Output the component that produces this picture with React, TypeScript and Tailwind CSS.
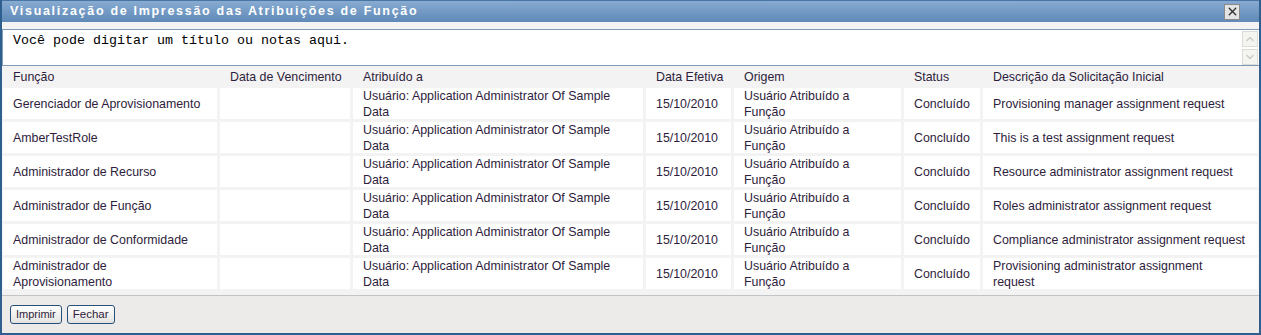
import { X, ChevronUp, ChevronDown } from "lucide-react"

type Row = {
  role: string
  due: string
  assigned: string
  date: string
  origin: string
  status: string
  desc: string
}

const assigned = "Usuário: Application Administrator Of Sample\nData"
const origin = "Usuário Atribuído a\nFunção"

const rows: Row[] = [
  {
    role: "Gerenciador de Aprovisionamento",
    due: "",
    assigned,
    date: "15/10/2010",
    origin,
    status: "Concluído",
    desc: "Provisioning manager assignment request",
  },
  {
    role: "AmberTestRole",
    due: "",
    assigned,
    date: "15/10/2010",
    origin,
    status: "Concluído",
    desc: "This is a test assignment request",
  },
  {
    role: "Administrador de Recurso",
    due: "",
    assigned,
    date: "15/10/2010",
    origin,
    status: "Concluído",
    desc: "Resource administrator assignment request",
  },
  {
    role: "Administrador de Função",
    due: "",
    assigned,
    date: "15/10/2010",
    origin,
    status: "Concluído",
    desc: "Roles administrator assignment request",
  },
  {
    role: "Administrador de Conformidade",
    due: "",
    assigned,
    date: "15/10/2010",
    origin,
    status: "Concluído",
    desc: "Compliance administrator assignment request",
  },
  {
    role: "Administrador de\nAprovisionamento",
    due: "",
    assigned,
    date: "15/10/2010",
    origin,
    status: "Concluído",
    desc: "Provisioning administrator assignment\nrequest",
  },
]

const headers = [
  "Função",
  "Data de Vencimento",
  "Atribuído a",
  "Data Efetiva",
  "Origem",
  "Status",
  "Descrição da Solicitação Inicial",
]

const cols = "grid grid-cols-[214px_130px_290px_85px_167px_76px_1fr] gap-x-[3px]"

function Cell({ children }: { children?: React.ReactNode }) {
  return (
    <div className="bg-white h-[31px] flex items-center pl-[10px] pr-[2px] pt-[1px] leading-[16px] whitespace-pre-line">
      <span>{children}</span>
    </div>
  )
}

export default function App() {
  return (
    <div
      className="w-[1261px] h-[335px] bg-[#f3f3f3] border-x-2 border-b-2 border-[#2f5f8f] flex flex-col text-[#2e1d3c] text-[12.4px] overflow-hidden"
      style={{ fontFamily: '"Liberation Sans", Arial, sans-serif' }}
    >
      {/* ── Title bar ── */}
      <div className="h-[22px] shrink-0 flex items-center justify-between pl-[8px] pr-[19px] bg-gradient-to-b from-[#88abd1] to-[#5f89b7] border-t border-[#4a76a6]">
        <span className="text-white font-bold text-[12.5px] tracking-[1.7px]">
          Visualização de Impressão das Atribuições de Função
        </span>
        <button className="w-[16px] h-[16px] bg-[#e4e4e4] border border-[#8a8a8a] flex items-center justify-center">
          <X size={13} strokeWidth={2.6} className="text-[#333]" />
        </button>
      </div>

      {/* ── Notes area ── */}
      <div className="pt-[7px] shrink-0">
        <div className="h-[37px] bg-white border-t border-l border-b border-[#7f9db9] flex justify-between">
          <div
            className="pl-[10px] pt-[3px] text-[13.33px] text-black leading-[16px]"
            style={{ fontFamily: '"Liberation Mono", "Courier New", monospace' }}
          >
            Você pode digitar um título ou notas aqui.
          </div>
          <div className="w-[16px] flex flex-col gap-[2px] pt-[1px] mr-[1px]">
            <div className="h-[16px] border border-[#dcdcd6] bg-[#f4f4f0] flex items-center justify-center">
              <ChevronUp size={12} strokeWidth={2.5} className="text-[#c8c8c0]" />
            </div>
            <div className="h-[16px] border border-[#dcdcd6] bg-[#f4f4f0] flex items-center justify-center">
              <ChevronDown size={12} strokeWidth={2.5} className="text-[#c8c8c0]" />
            </div>
          </div>
        </div>
      </div>

      {/* ── Table ── */}
      <div className="pl-[1px] pr-[1px] shrink-0">
        <div className={`${cols} h-[22px] items-center pt-[1px]`}>
          {headers.map((h) => (
            <div key={h} className="pl-[10px] whitespace-nowrap">
              {h}
            </div>
          ))}
        </div>
        <div className="flex flex-col gap-[3px]">
          {rows.map((r, i) => (
            <div key={i} className={cols}>
              <Cell>{r.role}</Cell>
              <Cell>{r.due}</Cell>
              <Cell>{r.assigned}</Cell>
              <Cell>{r.date}</Cell>
              <Cell>{r.origin}</Cell>
              <Cell>{r.status}</Cell>
              <Cell>{r.desc}</Cell>
            </div>
          ))}
        </div>
      </div>

      {/* ── Footer ── */}
      <div className="mt-[6px] flex-1 bg-[#ecebe9] border-t border-[#c4c4c4] flex items-start gap-[5px] pl-[8px] pt-[9px]">
        <button className="h-[19px] px-[5px] text-[11px] rounded-[3px] border border-[#254f7a] bg-gradient-to-b from-white to-[#e3e3e0] text-[#2e1d3c]">
          Imprimir
        </button>
        <button className="h-[19px] px-[5px] text-[11.5px] rounded-[3px] border border-[#254f7a] bg-gradient-to-b from-white to-[#e3e3e0] text-[#2e1d3c]">
          Fechar
        </button>
      </div>
    </div>
  )
}
